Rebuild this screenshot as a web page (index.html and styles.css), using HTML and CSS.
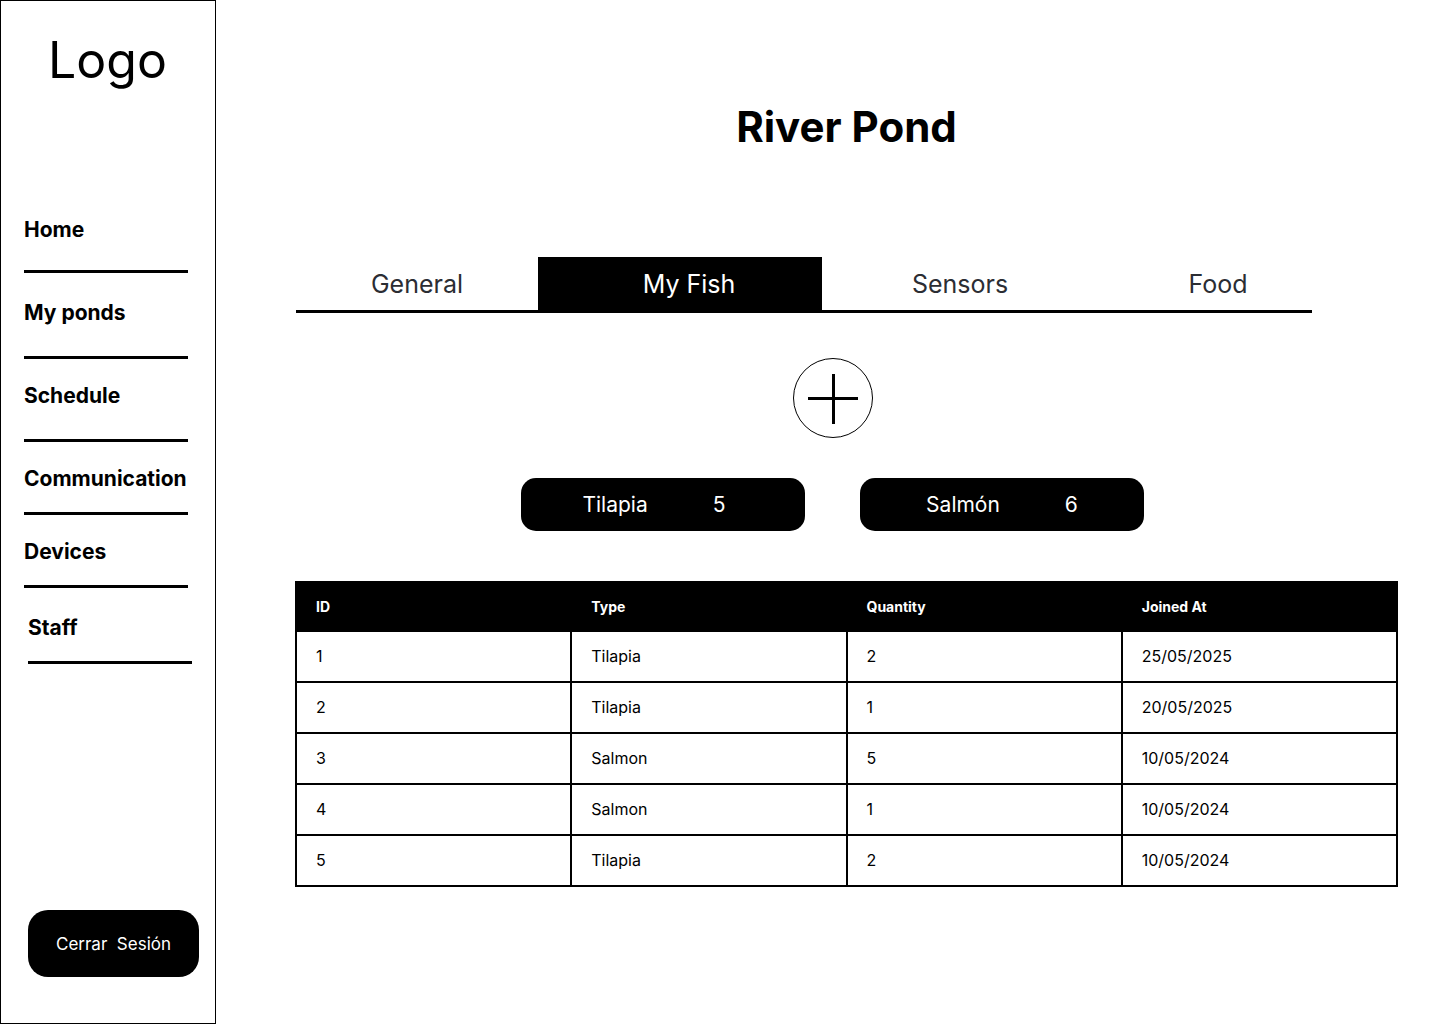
FILE: index.html
```html
<!DOCTYPE html>
<html lang="en">
<head>
  <meta charset="utf-8">
  <meta name="viewport" content="width=device-width, initial-scale=1">
  <title>River Pond</title>
  <link rel="stylesheet" href="styles.css">
</head>
<body>
  <div class="app">
    <aside class="sidebar">
      <div class="logo">Logo</div>
      <nav class="nav">
        <a class="nav-link nav-link-first" href="#">Home</a>
        <a class="nav-link nav-link-spaced nav-link-tall" href="#">My ponds</a>
        <a class="nav-link nav-link-tall" href="#">Schedule</a>
        <a class="nav-link" href="#">Communication</a>
        <a class="nav-link" href="#">Devices</a>
        <a class="nav-link nav-link-spaced nav-link-indent" href="#">Staff</a>
      </nav>
      <button class="logout" type="button">Cerrar&nbsp; Sesión</button>
    </aside>

    <main class="main">
      <h1 class="title">River Pond</h1>

      <nav class="tabs">
        <a class="tab" href="#">General</a>
        <a class="tab tab-active" href="#" aria-current="page">My Fish</a>
        <a class="tab" href="#">Sensors</a>
        <a class="tab tab-last" href="#">Food</a>
      </nav>

      <section class="summary">
        <button class="add" type="button" aria-label="Add fish">
          <svg width="80" height="80" viewBox="0 0 80 80" fill="none" stroke="#000">
            <circle cx="40" cy="40" r="39.5"/>
            <path d="M15 40.5H65M40.5 16V66" stroke-width="3"/>
          </svg>
        </button>
        <div class="cards">
          <div class="card card-tilapia"><span>Tilapia</span><span>5</span></div>
          <div class="card"><span>Salmón</span><span>6</span></div>
        </div>
      </section>

      <table class="fish">
        <thead>
          <tr><th scope="col">ID</th><th scope="col">Type</th><th scope="col">Quantity</th><th scope="col">Joined At</th></tr>
        </thead>
        <tbody>
          <tr><td>1</td><td>Tilapia</td><td>2</td><td>25/05/2025</td></tr>
          <tr><td>2</td><td>Tilapia</td><td>1</td><td>20/05/2025</td></tr>
          <tr><td>3</td><td>Salmon</td><td>5</td><td>10/05/2024</td></tr>
          <tr><td>4</td><td>Salmon</td><td>1</td><td>10/05/2024</td></tr>
          <tr><td>5</td><td>Tilapia</td><td>2</td><td>10/05/2024</td></tr>
        </tbody>
      </table>
    </main>
  </div>
</body>
</html>
```
FILE: styles.css
```css
* {
  box-sizing: border-box;
}

body {
  margin: 0;
  background: #fff;
  color: #000;
  font-family: Inter, "Liberation Sans", sans-serif;
}

a {
  color: inherit;
  text-decoration: none;
}

button {
  font-family: inherit;
  cursor: pointer;
}

.app {
  display: flex;
  min-height: 100vh;
}

/* Sidebar */
.sidebar {
  display: flex;
  flex-direction: column;
  flex: none;
  width: 216px;
  padding: 29px 16px 46px 23px;
  border: 1px solid #000;
}

.logo {
  padding-right: 8px;
  font-size: 50px;
  line-height: 60px;
  text-align: center;
}

.nav {
  display: flex;
  flex-direction: column;
  margin-top: 103px;
}

.nav-link {
  width: 164px;
  padding: 24px 0 20px;
  border-bottom: 3px solid #000;
  font-size: 21px;
  font-weight: 700;
  line-height: 26px;
  white-space: nowrap;
}

.nav-link-first {
  padding-bottom: 27px;
}

.nav-link-spaced {
  padding-top: 27px;
}

.nav-link-tall {
  padding-bottom: 30px;
}

.nav-link-indent {
  margin-left: 4px;
}

.logout {
  height: 67px;
  margin: auto 0 0 4px;
  padding: 0;
  border: 0;
  border-radius: 20px;
  background: #000;
  color: #fff;
  font-size: 17px;
}

/* Main area */
.main {
  flex: 1;
  min-width: 0;
  padding: 103px 42px 48px 79px;
}

.title {
  margin: 0;
  font-size: 42px;
  font-weight: 700;
  line-height: 48px;
  text-align: center;
}

.tabs {
  display: grid;
  grid-template-columns: 242fr 284fr 276fr 214fr;
  margin: 106px 86px 0 1px;
  border-bottom: 3px solid #000;
}

.tab {
  display: flex;
  align-items: center;
  justify-content: center;
  height: 53px;
  color: #2b2d33;
  font-size: 25px;
}

.tab-active {
  padding-left: 18px;
  background: #000;
  color: #fff;
}

.tab-last {
  padding-left: 26px;
}

.summary {
  display: flex;
  flex-direction: column;
  align-items: center;
  gap: 40px;
  margin-top: 45px;
  padding-right: 28px;
}

.add {
  width: 80px;
  height: 80px;
  padding: 0;
  border: 0;
  border-radius: 50%;
  background: none;
}

.add svg {
  display: block;
}

.cards {
  display: flex;
  flex-wrap: wrap;
  gap: 55px;
}

.card {
  display: flex;
  align-items: center;
  justify-content: center;
  gap: 65px;
  width: 284px;
  height: 53px;
  border-radius: 15px;
  background: #000;
  color: #fff;
  font-size: 21px;
}

.card-tilapia {
  padding-right: 18px;
}

/* Fish table */
.fish {
  width: 100%;
  margin-top: 50px;
  border-collapse: collapse;
  table-layout: fixed;
}

.fish th,
.fish td {
  height: 51px;
  padding: 0 19px 2px;
  border: 2px solid #000;
  font-size: 16px;
  text-align: left;
}

.fish th {
  height: 49px;
  padding-bottom: 0;
  background: #000;
  color: #fff;
  font-size: 14px;
  font-weight: 700;
}
```
